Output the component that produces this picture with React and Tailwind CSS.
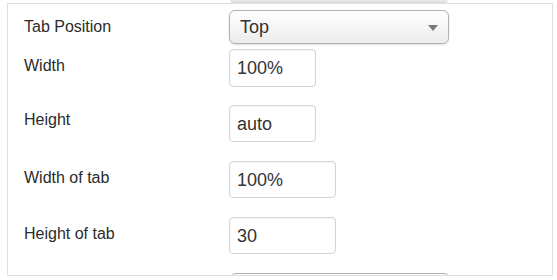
const font = { fontFamily: '"Liberation Sans", Arial, sans-serif' };

function Field({ label, children, className = '', lift = 'pb-1' }) {
  return (
    <div className={`flex items-center ${className}`}>
      <div className={`w-[205px] shrink-0 ${lift} text-[16px] text-[#2b2b2b]`}>{label}</div>
      {children}
    </div>
  );
}

function TextBox({ value, width }) {
  return (
    <div
      className={`${width} h-full flex items-center pl-[7px] pt-[1px] border border-[#d4d4d4] rounded-[4px] bg-white text-[18px] text-[#333] shadow-[inset_0_1px_2px_rgba(0,0,0,0.06)]`}
    >
      {value}
    </div>
  );
}

function SelectBox({ value, className = '' }) {
  return (
    <div
      className={`w-[220px] h-full flex items-center justify-between pl-[10px] pr-[10px] border border-[#b0b0b0] rounded-[6px] bg-gradient-to-b from-white to-[#ececec] shadow-[0_1px_2px_rgba(0,0,0,0.12)] text-[18px] text-[#333] ${className}`}
    >
      <span>{value}</span>
      <svg width="10" height="6" viewBox="0 0 10 6" className="mt-[1px]">
        <path d="M0 0h10L5 6z" fill="#777" />
      </svg>
    </div>
  );
}

export default function App() {
  return (
    <div className="w-[557px] h-[280px] bg-white overflow-hidden" style={font}>
      {/* tail of the previous select, above the panel */}
      <div className="h-[3px] flex">
        <div className="ml-[230px] w-[218px] h-[3px] rounded-b-[4px] bg-gradient-to-b from-[#eeeeee] to-[#d9d9d9]" />
      </div>

      <div className="ml-[7px] w-[546px] h-[273px] border border-[#dbe1e3] overflow-hidden pt-[6px] pl-[16px]">
        <Field label="Tab Position" className="h-[34px]" lift="pb-0">
          <SelectBox value="Top" />
        </Field>
        <Field label="Width" className="h-[38px] mt-[5px]">
          <TextBox value="100%" width="w-[87px]" />
        </Field>
        <Field label="Height" className="h-[37px] mt-[18px]" lift="pb-[7px]">
          <TextBox value="auto" width="w-[87px]" />
        </Field>
        <Field label="Width of tab" className="h-[37px] mt-[19px]">
          <TextBox value="100%" width="w-[107px]" />
        </Field>
        <Field label="Height of tab" className="h-[37px] mt-[19px]">
          <TextBox value="30" width="w-[107px]" />
        </Field>
        <Field label="" className="h-[34px] mt-[19px]">
          <SelectBox value="" className="ml-[1px]" />
        </Field>
      </div>
    </div>
  );
}
